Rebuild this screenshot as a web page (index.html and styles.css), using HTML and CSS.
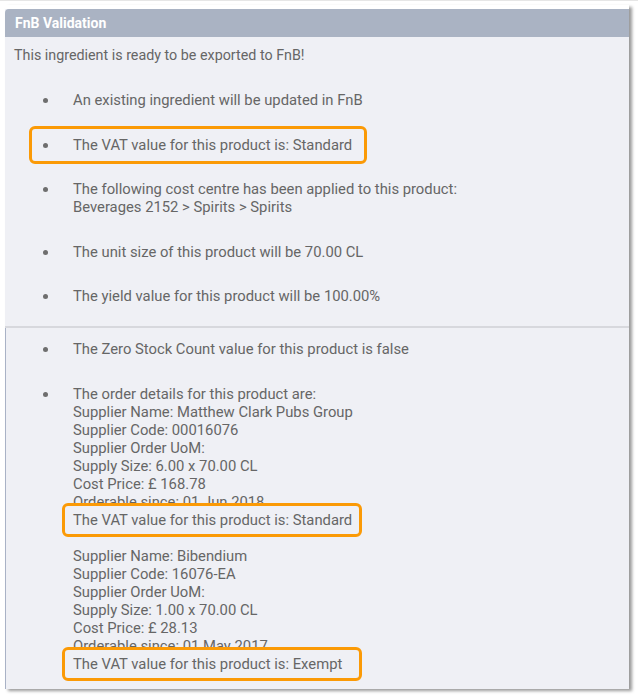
FILE: index.html
```html
<!DOCTYPE html>
<html>
<head>
<meta charset="utf-8">
<link rel="stylesheet" href="styles.css">
</head>
<body>
<div class="page">
  <div class="panel">
    <section class="part part-top">
      <div class="header">FnB Validation</div>
      <p class="intro">This ingredient is ready to be exported to FnB!</p>
      <ul class="list">
        <li><div>An existing ingredient will be updated in FnB</div></li>
        <li class="hl"><div>The VAT value for this product is: Standard</div></li>
        <li><div>The following cost centre has been applied to this product:<br>Beverages 2152 &gt; Spirits &gt; Spirits</div></li>
        <li><div>The unit size of this product will be 70.00 CL</div></li>
        <li><div>The yield value for this product will be 100.00%</div></li>
      </ul>
    </section>
    <section class="part part-bottom">
      <ul class="list">
        <li><div>The Zero Stock Count value for this product is false</div></li>
        <li>
          <div>
            <div>The order details for this product are:<br>Supplier Name: Matthew Clark Pubs Group<br>Supplier Code: 00016076<br>Supplier Order UoM:<br>Supply Size: 6.00 x 70.00 CL<br>Cost Price: £ 168.78<br>Orderable since: 01 Jun 2018</div>
            <div class="vat">The VAT value for this product is: Standard</div>
            <div class="spacer"></div>
            <div>Supplier Name: Bibendium<br>Supplier Code: 16076-EA<br>Supplier Order UoM:<br>Supply Size: 1.00 x 70.00 CL<br>Cost Price: £ 28.13<br>Orderable since: 01 May 2017</div>
            <div class="vat">The VAT value for this product is: Exempt</div>
          </div>
        </li>
      </ul>
    </section>
  </div>
</div>
</body>
</html>
```

FILE: styles.css
```css
html, body {
  margin: 0;
  padding: 0;
  background: #ffffff;
}

body {
  font-family: Roboto, "Liberation Sans", sans-serif;
  font-size: 14.8px;
  line-height: 18px;
  color: #666666;
}

.page {
  padding: 4px 9px 10px 5px;
  border-top: 1px solid #e6e6e6;
}

.panel {
  width: 624px;
  background: #ffffff;
  padding-top: 4px;
  box-shadow: 3px 2px 3px rgba(0, 0, 0, 0.4);
}

.part {
  background: #eff0f5;
}

.part-top {
  padding-bottom: 21px;
  border-bottom: 2px solid #d7d8dd;
}

.part-bottom {
  border-left: 1px solid #a9b2c6;
  padding-top: 12px;
  padding-bottom: 16px;
}

.header {
  height: 28px;
  line-height: 28px;
  background: #aab3c3;
  color: #ffffff;
  font-weight: 700;
  font-size: 14px;
  padding-left: 10px;
  border-top-left-radius: 4px;
}

.intro {
  margin: 9px 0 0 9px;
  font-size: 14.3px;
}

.list {
  list-style: none;
  margin: 27px 0 0 0;
  padding: 0 0 0 37px;
}

.part-bottom .list {
  margin-top: 0;
  padding-left: 36px;
}

.list li {
  display: flex;
  align-items: flex-start;
}

.list li::before {
  content: "";
  flex: none;
  width: 5px;
  height: 5px;
  border-radius: 50%;
  background: #6e6e6e;
  margin: 7px 25px 0 1px;
}

.list li + li {
  margin-top: 26.5px;
}

.list li.hl {
  width: 338px;
  box-sizing: border-box;
  margin-left: -13px;
  margin-top: 16.5px;
  margin-bottom: -10px;
  padding: 7px 10px 7px 10px;
  border: 3px solid #fb9a06;
  border-radius: 6px;
}

.vat {
  position: relative;
  width: 300px;
  box-sizing: border-box;
  margin: -8px 0 -8px -11px;
  padding: 5px 8px;
  border: 3px solid #fb9a06;
  border-radius: 6px;
  background: #eff0f5;
  white-space: nowrap;
}

.spacer {
  height: 18px;
}
```
